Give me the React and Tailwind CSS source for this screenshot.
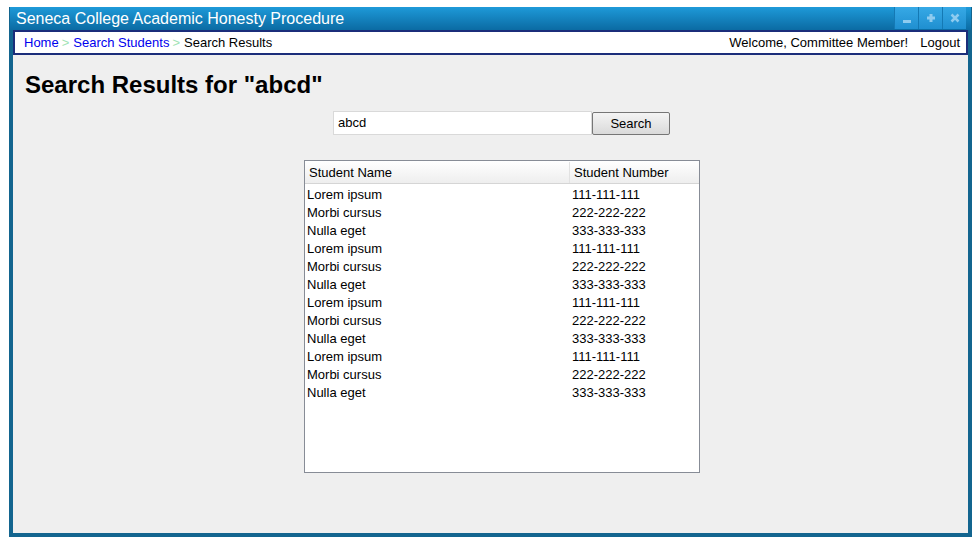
import React from 'react';

const rows = [
  ['Lorem ipsum', '111-111-111'],
  ['Morbi cursus', '222-222-222'],
  ['Nulla eget', '333-333-333'],
  ['Lorem ipsum', '111-111-111'],
  ['Morbi cursus', '222-222-222'],
  ['Nulla eget', '333-333-333'],
  ['Lorem ipsum', '111-111-111'],
  ['Morbi cursus', '222-222-222'],
  ['Nulla eget', '333-333-333'],
  ['Lorem ipsum', '111-111-111'],
  ['Morbi cursus', '222-222-222'],
  ['Nulla eget', '333-333-333'],
];

const WinButton = ({ children }) => (
  <div className="w-[24px] h-[22px] bg-gradient-to-b from-[#36a9e6] to-[#1f8fd0] border-l border-[#1479b4] flex items-center justify-center">
    {children}
  </div>
);

export default function App() {
  return (
    <div className="w-[978px] h-[544px] bg-white pt-[7px] pl-[9px] font-['Liberation_Sans',Arial,sans-serif] text-[13px] text-black">
      <div className="w-[963px] h-[530px] flex flex-col bg-[#13658f] px-[4px] pb-[4px]">
        {/* title bar */}
        <div className="-mx-[3px] h-[23px] flex items-stretch bg-gradient-to-b from-[#1e9ad9] to-[#0b6ba3]">
          <div className="flex-1 pl-[6px] pt-[2px] text-white text-[16px] leading-[20px]">
            Seneca College Academic Honesty Procedure
          </div>
          <div className="flex mr-[5px]">
            <WinButton>
              <div className="w-[8px] h-[3px] bg-[#8ecbef] mt-[6px]" />
            </WinButton>
            <WinButton>
              <svg width="10" height="10" viewBox="0 0 10 10">
                <path d="M5 1v8M1 5h8" stroke="#8ecbef" strokeWidth="3" />
              </svg>
            </WinButton>
            <WinButton>
              <svg width="10" height="10" viewBox="0 0 10 10">
                <path d="M1.5 1.5l7 7M8.5 1.5l-7 7" stroke="#8ecbef" strokeWidth="2.5" />
              </svg>
            </WinButton>
          </div>
        </div>

        {/* breadcrumb bar */}
        <div className="h-[25px] bg-white border-2 border-[#1b2d7a] flex items-center justify-between pl-[9px] pr-[6px]">
          <div className="flex items-center">
            <span className="text-[#0000ee]">Home</span>
            <span className="text-[#9fe3b5] pl-[3px] pr-[4px]">&gt;</span>
            <span className="text-[#0000ee]">Search Students</span>
            <span className="text-[#9fe3b5] pl-[3px] pr-[4px]">&gt;</span>
            <span>Search Results</span>
          </div>
          <div className="flex items-center gap-[12px]">
            <span>Welcome, Committee Member!</span>
            <span>Logout</span>
          </div>
        </div>

        {/* content */}
        <div className="flex-1 bg-[#efefef] flex flex-col">
          <h1 className="mt-[16px] ml-[12px] text-[24px] leading-[28px] font-bold">Search Results for "abcd"</h1>

          <div className="mt-[12px] ml-[320px] flex items-center">
            <div className="w-[259px] h-[24px] bg-white border border-[#d9d9d9] pl-[4px] leading-[22px]">abcd</div>
            <button className="w-[78px] h-[23px] border border-[#767676] rounded-[2px] bg-gradient-to-b from-[#f4f4f4] to-[#dadada] text-[13px] leading-[21px]">
              Search
            </button>
          </div>

          <div className="mt-[25px] ml-[291px] w-[396px] h-[313px] bg-white border border-[#878c96] flex flex-col">
            <div className="h-[23px] flex bg-gradient-to-b from-white to-[#eeeeee] border-b border-[#d5d5d5] pt-[1px]">
              <div className="w-[265px] border-r border-[#e2e2e2] pl-[4px] leading-[22px]">Student Name</div>
              <div className="flex-1 pl-[4px] leading-[22px]">Student Number</div>
            </div>
            <div className="pt-[2px]">
              {rows.map(([name, num], i) => (
                <div key={i} className="flex h-[18px] leading-[18px]">
                  <div className="w-[267px] pl-[2px]">{name}</div>
                  <div className="flex-1">{num}</div>
                </div>
              ))}
            </div>
          </div>
        </div>
      </div>
    </div>
  );
}
